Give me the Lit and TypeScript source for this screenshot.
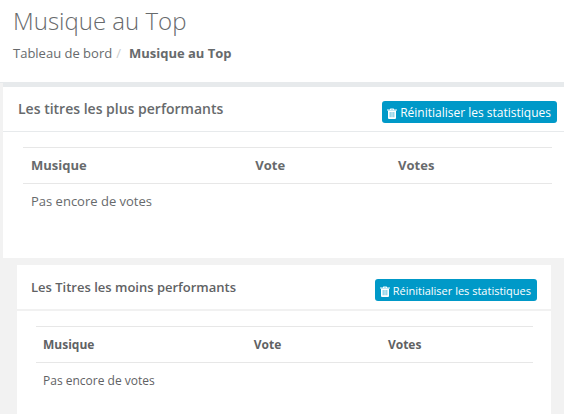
import { LitElement, html, css } from "lit";
import { customElement, property } from "lit/decorators.js";
import { classMap } from "lit/directives/class-map.js";

@customElement("stats-panel")
class StatsPanel extends LitElement {
  @property() heading = "";
  @property({ type: Boolean }) compact = false;

  static styles = css`
    :host {
      display: block;
    }
    .panel {
      background: #fff;
      color: #676a6c;
      font-size: 13px;
      line-height: 20px;
    }
    .title {
      display: flex;
      justify-content: space-between;
      align-items: flex-start;
      height: 45px;
      box-sizing: border-box;
      padding: 12px 7px 0 15px;
      border-bottom: 1px solid #e7eaec;
    }
    h2 {
      margin: 0;
      font-size: 14px;
      line-height: 20px;
      font-weight: 600;
    }
    button {
      display: flex;
      align-items: center;
      gap: 3px;
      height: 22px;
      margin-top: 2px;
      padding: 2px 6px 0 5px;
      border: 0;
      border-radius: 3px;
      background: #0099c8;
      color: #fff;
      font: 12px/20px "Open Sans", sans-serif;
      white-space: nowrap;
      cursor: pointer;
    }
    svg {
      display: block;
      width: 10px;
      height: 11px;
      flex: none;
    }
    .content {
      padding: 15px 12px 39px 20px;
    }
    table {
      width: 100%;
      border-collapse: separate;
      border-spacing: 0;
      table-layout: fixed;
    }
    th,
    td {
      box-sizing: border-box;
      height: 36px;
      padding: 8px;
      line-height: 19px;
      text-align: left;
      border-top: 1px solid #e7e7e7;
    }
    th {
      font-weight: 700;
    }
    .song {
      width: 42.4%;
    }
    .vote {
      width: 27%;
    }
    .compact {
      font-size: 12px;
      color: #5f6264;
    }
    .compact .title {
      height: 46px;
      padding: 12px 14px 0 14px;
      border-bottom: 2px solid #f1f1f1;
    }
    .compact h2 {
      font-size: 13px;
    }
    .compact button {
      font-size: 11px;
    }
    .compact .content {
      padding: 15px 18px 16px 19px;
    }
    .compact th,
    .compact td {
      padding: 8px 7px;
    }
  `;

  render() {
    return html`
      <section class=${classMap({ panel: true, compact: this.compact })}>
        <div class="title">
          <h2>${this.heading}</h2>
          <button type="button">
            <svg viewBox="0 0 10 11" aria-hidden="true">
              <path
                fill="#fff"
                d="M3 1.500V1Q3 .5 3.500.5h3Q7 .5 7 1v.5h3v1H0v-1zM4 1.500h2V1.200H4z"
                fill-rule="evenodd"
              />
              <path
                fill="#fff"
                fill-rule="evenodd"
                d="M1 2.500h8V10q0 1-1 1H2q-1 0-1-1zM2.800 4v5.300h.6V4zM4.700 4v5.300h.6V4zM6.600 4v5.300h.6V4z"
              />
            </svg>
            Réinitialiser les statistiques
          </button>
        </div>
        <div class="content">
          <table>
            <thead>
              <tr>
                <th class="song" scope="col">Musique</th>
                <th class="vote" scope="col">Vote</th>
                <th scope="col">Votes</th>
              </tr>
            </thead>
            <tbody>
              <tr>
                <td colspan="3">Pas encore de votes</td>
              </tr>
            </tbody>
          </table>
        </div>
      </section>
    `;
  }
}

@customElement("app-root")
class AppRoot extends LitElement {
  static styles = css`
    :host {
      display: block;
      min-height: 100vh;
      background: #f2f2f2;
      color: #676a6c;
      font-family: "Open Sans", sans-serif;
      font-size: 13px;
    }
    header {
      background: #fff;
      padding: 6px 13px 19px;
      border-bottom: 1px solid #e7eaec;
    }
    h1 {
      margin: 0;
      font-size: 24px;
      line-height: 30px;
      font-weight: 300;
    }
    ol {
      display: flex;
      margin: 8px 0 0;
      padding: 0;
      list-style: none;
      line-height: 19px;
    }
    li + li::before {
      content: "/";
      padding: 0 8px 0 4px;
      color: #ccc;
      font-weight: 400;
    }
    a {
      color: inherit;
      text-decoration: none;
    }
    .current {
      font-weight: 700;
    }
    main {
      display: flex;
      flex-direction: column;
      gap: 7px;
      padding-left: 3px;
    }
    .first {
      border-top: 4px solid #e7eaec;
    }
    .second {
      margin: 0 13px 0 14px;
    }
  `;

  render() {
    return html`
      <header>
        <h1>Musique au Top</h1>
        <nav aria-label="Fil d'Ariane">
          <ol>
            <li><a href="#">Tableau de bord</a></li>
            <li class="current" aria-current="page">Musique au Top</li>
          </ol>
        </nav>
      </header>
      <main>
        <stats-panel class="first" heading="Les titres les plus performants"></stats-panel>
        <stats-panel class="second" heading="Les Titres les moins performants" compact></stats-panel>
      </main>
    `;
  }
}
